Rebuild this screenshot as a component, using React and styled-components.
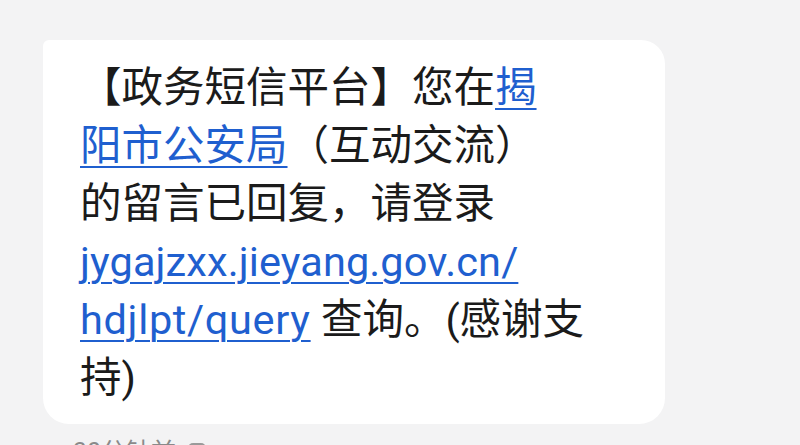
import React from "react";
import styled, { createGlobalStyle } from "styled-components";

const Global = createGlobalStyle`
  html, body { margin: 0; padding: 0; background: #f3f3f4; }
  body { width: 800px; height: 445px; overflow: hidden; }
`;

const Page = styled.div`
  width: 800px;
  height: 445px;
  overflow: hidden;
  box-sizing: border-box;
  padding: 40px 0 0 43px;
  background: #f3f3f4;
  font-family: Roboto, "Noto Sans CJK SC", sans-serif;
`;

const Bubble = styled.div`
  width: 622px;
  box-sizing: border-box;
  background: #ffffff;
  border-radius: 6px 24px 26px 26px;
  padding: 19px 20px 17px 37px;
`;

const Text = styled.p`
  margin: 0;
  font-size: 41.5px;
  line-height: 58px;
  color: #1b1b1b;
  white-space: nowrap;
`;

const Link = styled.span`
  color: #1f5fcf;
  text-decoration: underline;
  text-decoration-thickness: 2px;
  text-underline-offset: 6px;
  letter-spacing: ${(p) => p.$spacing || "0"};
`;

const Meta = styled.div`
  display: flex;
  align-items: center;
  gap: 12px;
  margin: 14px 0 0 30px;
  font-size: 25px;
  line-height: 30px;
  color: #8a8a8a;
`;

const SimBadge = styled.span`
  width: 18px;
  height: 20px;
  border-radius: 5px;
  background: #9a9a9a;
`;

export default function App() {
  return (
    <>
      <Global />
      <Page>
        <Bubble>
          <Text>
            【政务短信平台】您在<Link>揭<br />阳市公安局</Link>（互动交流）
            <br />
            的留言已回复，请登录
            <br />
            <Link $spacing="0.1px">jygajzxx.jieyang.gov.cn/</Link>
            <br />
            <Link $spacing="0.65px">hdjlpt/query</Link> 查询。(感谢支
            <br />
            持)
          </Text>
        </Bubble>
        <Meta>
          30分钟前
          <SimBadge />
        </Meta>
      </Page>
    </>
  );
}
